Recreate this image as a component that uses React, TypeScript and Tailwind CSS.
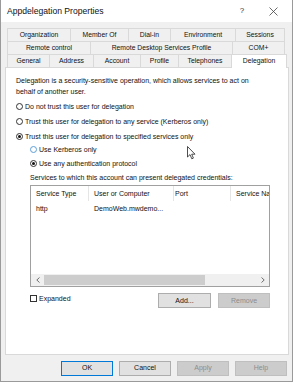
import React from 'react';

type Tab = { label: string; w: number };

const row1: Tab[] = [
    { label: 'Organization', w: 63 },
    { label: 'Member Of', w: 58 },
    { label: 'Dial-in', w: 42 },
    { label: 'Environment', w: 65 },
    { label: 'Sessions', w: 50 },
];
const row2: Tab[] = [
    { label: 'Remote control', w: 83 },
    { label: 'Remote Desktop Services Profile', w: 142 },
    { label: 'COM+', w: 53 },
];
const row3: Tab[] = [
    { label: 'General', w: 42 },
    { label: 'Address', w: 44 },
    { label: 'Account', w: 47 },
    { label: 'Profile', w: 38 },
    { label: 'Telephones', w: 53 },
];

const TabRow: React.FC<{ tabs: Tab[] }> = ({ tabs }) => (
    <div className="flex h-[13px]">
        {tabs.map(t => (
            <div
                key={t.label}
                style={{ width: t.w }}
                className="flex items-center justify-center border-t border-l border-[#d9d9d9] last:border-r text-[6.8px] text-[#111] bg-[#f0f0f0]"
            >
                {t.label}
            </div>
        ))}
    </div>
);

const Radio: React.FC<{ checked?: boolean; focus?: boolean }> = ({ checked, focus }) => (
    <span
        className={`w-[7px] h-[7px] rounded-full border bg-white flex items-center justify-center shrink-0 ${
            focus ? 'border-[#5c9fd8]' : 'border-[#333]'
        }`}
    >
        {checked && <span className="w-[3px] h-[3px] rounded-full bg-[#111]" />}
    </span>
);

const RadioRow: React.FC<{ label: string; checked?: boolean; focus?: boolean; h: string }> = ({ label, checked, focus, h }) => (
    <div className={`flex items-center gap-[2px] ${h}`}>
        <Radio checked={checked} focus={focus} />
        <span>{label}</span>
    </div>
);

const Btn: React.FC<{ label: string; w: string; disabled?: boolean; def?: boolean }> = ({ label, w, disabled, def }) => (
    <div
        className={`${w} h-[15px] flex items-center justify-center text-[7px] border ${
            disabled
                ? 'bg-[#cccccc] border-[#bfbfbf] text-[#8c8c8c]'
                : def
                ? 'bg-[#e1e1e1] border-[#0078d7] text-[#111]'
                : 'bg-[#e1e1e1] border-[#adadad] text-[#111]'
        }`}
    >
        {label}
    </div>
);

const App: React.FC = () => {
    return (
        <div
            className="relative w-[293px] h-[382px] bg-[#f0f0f0] border-l border-r border-b border-[#9a9a9a] overflow-hidden flex flex-col text-[#111]"
            style={{ fontFamily: '"Liberation Sans", Arial, sans-serif' }}
        >
            {/* title bar */}
            <div className="h-[22px] bg-white flex items-center pl-[6px] text-[8.6px] shrink-0">
                <span className="flex-1">Appdelegation Properties</span>
                <span className="w-[10px] text-center text-[8px] text-[#333] mr-[22px]">?</span>
                <svg width="9" height="9" viewBox="0 0 9 9" className="mr-[14px]">
                    <path d="M0.5 0.5L8.5 8.5M8.5 0.5L0.5 8.5" stroke="#444" strokeWidth="0.8" />
                </svg>
            </div>

            {/* tabs */}
            <div className="pl-[6px] pt-[6px] shrink-0">
                <TabRow tabs={row1} />
                <TabRow tabs={row2} />
                <div className="flex h-[13px] items-end">
                    <div className="flex h-[13px]">
                        {row3.map(t => (
                            <div
                                key={t.label}
                                style={{ width: t.w }}
                                className="flex items-center justify-center border-t border-l border-[#d9d9d9] text-[6.8px] bg-[#f0f0f0]"
                            >
                                {t.label}
                            </div>
                        ))}
                    </div>
                    <div className="w-[56px] h-[14px] -mb-px flex items-center justify-center border-t border-l border-r border-[#d9d9d9] bg-white text-[6.8px] relative z-10">
                        Delegation
                    </div>
                </div>
            </div>

            {/* panel */}
            <div className="ml-[4px] w-[284px] h-[288px] bg-white border border-[#d9d9d9] pl-[10px] pt-[7px] text-[7px] leading-[11px] shrink-0">
                <p className="leading-[11px] w-[252px]">
                    Delegation is a security-sensitive operation, which allows services to act on behalf of another user.
                </p>
                <div className="mt-[2px]">
                    <RadioRow h="h-[15px]" label="Do not trust this user for delegation" />
                    <RadioRow h="h-[15px]" label="Trust this user for delegation to any service (Kerberos only)" />
                    <RadioRow h="h-[15px]" checked label="Trust this user for delegation to specified services only" />
                </div>
                <div className="pl-[14px] -mt-[2px]">
                    <RadioRow h="h-[14px]" focus label="Use Kerberos only" />
                    <RadioRow h="h-[14px]" checked label="Use any authentication protocol" />
                    <div className="h-[14px] flex items-center">
                        Services to which this account can present delegated credentials:
                    </div>

                    {/* list */}
                    <div className="mt-px w-[240px] h-[102px] border border-[#a0a0a0] flex flex-col">
                        <div className="h-[15px] flex items-center">
                            <div className="w-[58px] h-full border-r border-[#e5e5e5] flex items-center pl-[5px]">Service Type</div>
                            <div className="w-[85px] h-full border-r border-[#e5e5e5] flex items-center pl-[5px]">User or Computer</div>
                            <div className="w-[57px] h-full border-r border-[#e5e5e5] flex items-center pl-[1px]">Port</div>
                            <div className="flex-1 h-full flex items-center pl-[5px] overflow-hidden whitespace-nowrap">Service Na</div>
                        </div>
                        <div className="h-[14px] flex items-center text-[#111]">
                            <span className="w-[58px] pl-[5px] text-[#111]">http</span>
                            <span className="pl-[5px] text-[#111]">DemoWeb.mwdemo...</span>
                        </div>
                        <div className="flex-1" />
                        <div className="h-[12px] bg-[#f0f0f0] flex items-center">
                            <div className="w-[13px] flex items-center justify-center">
                                <svg width="4" height="6" viewBox="0 0 4 6">
                                    <path d="M3.5 0.5L0.8 3L3.5 5.5" fill="none" stroke="#606060" strokeWidth="0.9" />
                                </svg>
                            </div>
                            <div className="w-[161px] h-[10px] bg-[#cdcdcd]" />
                            <div className="flex-1" />
                            <div className="w-[13px] flex items-center justify-center">
                                <svg width="4" height="6" viewBox="0 0 4 6">
                                    <path d="M0.5 0.5L3.2 3L0.5 5.5" fill="none" stroke="#606060" strokeWidth="0.9" />
                                </svg>
                            </div>
                        </div>
                    </div>

                    <div className="mt-[6px] flex w-[240px]">
                        <div className="flex items-center gap-[2px] h-[12px] mt-[-1px] flex-1">
                            <span className="w-[7px] h-[7px] border border-[#333] bg-white" />
                            <span>Expanded</span>
                        </div>
                        <div className="flex gap-[7px]">
                            <Btn label="Add..." w="w-[53px]" />
                            <Btn label="Remove" w="w-[52px]" disabled />
                        </div>
                    </div>
                </div>
            </div>

            {/* footer buttons */}
            <div className="flex gap-[6px] pl-[60px] mt-[6px]">
                <Btn label="OK" w="w-[52px]" def />
                <Btn label="Cancel" w="w-[52px]" />
                <Btn label="Apply" w="w-[52px]" disabled />
                <Btn label="Help" w="w-[52px]" disabled />
            </div>

            {/* mouse cursor */}
            <svg className="absolute left-[186px] top-[146px]" width="9" height="14" viewBox="0 0 9 14">
                <path d="M0.5 0.5L0.5 11L3 8.6L4.8 12.8L6.4 12.1L4.7 8.2L8 8.2Z" fill="white" stroke="#222" strokeWidth="0.8" strokeLinejoin="round" />
            </svg>
        </div>
    );
};

export default App;
